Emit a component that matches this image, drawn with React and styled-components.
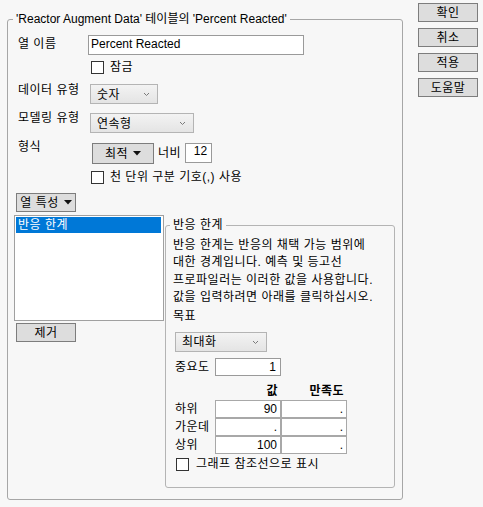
import styled, { createGlobalStyle } from "styled-components";

const GlobalStyle = createGlobalStyle`
  body {
    margin: 0;
    background: #f7f7f7;
  }
  #root {
    font-family: "Liberation Sans", "Noto Sans CJK KR", sans-serif;
    font-size: 12px;
    letter-spacing: 0.5px;
    color: #000;
  }
`;

function Chevron() {
  return (
    <svg width="7" height="5" viewBox="0 0 7 5">
      <path d="M1 1 L3.5 3.5 L6 1" fill="none" stroke="#7a7a7a" strokeWidth="1" />
    </svg>
  );
}

function Caret() {
  return (
    <svg width="8" height="5" viewBox="0 0 8 5">
      <polygon points="0,0 8,0 4,4.5" fill="#111" />
    </svg>
  );
}

function Select({ width, children }) {
  return (
    <SelectBox $w={width}>
      <span>{children}</span>
      <Chevron />
    </SelectBox>
  );
}

function Check({ children, gap = 6 }) {
  return (
    <CheckRow $gap={gap}>
      <Box />
      <span>{children}</span>
    </CheckRow>
  );
}

export default function App() {
  return (
    <>
      <GlobalStyle />
      <Page>
        <Group>
          <Legend>'Reactor Augment Data' 테이블의 'Percent Reacted'</Legend>

          <Row>
            <Label $dy={1}>열 이름</Label>
            <Field $w={216} $h={20} $latin>
              Percent Reacted
            </Field>
          </Row>
          <Row $top={6} $indent={73}>
            <Check>잠금</Check>
          </Row>
          <Row $top={10}>
            <Label $dy={-2}>데이터 유형</Label>
            <Indent $x={2}>
              <Select width={68}>숫자</Select>
            </Indent>
          </Row>
          <Row $top={9}>
            <Label $dy={-3}>모델링 유형</Label>
            <Indent $x={2}>
              <Select width={104}>연속형</Select>
            </Indent>
          </Row>
          <Row $top={10}>
            <Label $dy={-4}>형식</Label>
            <Indent $x={4}>
              <Button $w={62} $h={21}>
                최적 <Caret />
              </Button>
            </Indent>
            <Inline>너비</Inline>
            <Field $w={27} $h={20} $align="right" $lh={14} $latin>
              12
            </Field>
          </Row>
          <Row $top={7} $indent={73}>
            <Check>천 단위 구분 기호(,) 사용</Check>
          </Row>
          <Row $top={9} $indent={-2}>
            <Button $w={60} $h={19}>
              열 특성 <Caret />
            </Button>
          </Row>

          <Split>
            <LeftCol>
              <ListBox>
                <ListItem $selected>반응 한계</ListItem>
              </ListBox>
              <Button $w={60} $h={19} $ml={2}>
                제거
              </Button>
            </LeftCol>

            <Section>
              <SubLegend>반응 한계</SubLegend>
              <Description>
                {"반응 한계는 반응의 채택 가능 범위에\n대한 경계입니다. 예측 및 등고선\n프로파일러는 이러한 값을 사용합니다.\n값을 입력하려면 아래를 클릭하십시오."}
              </Description>
              <Caption>목표</Caption>
              <Indent $x={2} $top={8}>
                <Select width={92}>최대화</Select>
              </Indent>
              <SubRow $top={6}>
                <SubLabel>중요도</SubLabel>
                <Field $w={66} $h={18} $align="right" $lh={16} $latin>
                  1
                </Field>
              </SubRow>
              <LimitTable>
                <span />
                <HeadCell>값</HeadCell>
                <HeadCell>만족도</HeadCell>
                <SubLabel>하위</SubLabel>
                <Cell>90</Cell>
                <Cell>.</Cell>
                <SubLabel>가운데</SubLabel>
                <Cell>.</Cell>
                <Cell>.</Cell>
                <SubLabel>상위</SubLabel>
                <Cell>100</Cell>
                <Cell>.</Cell>
              </LimitTable>
              <Indent $x={3} $top={4}>
                <Check gap={7}>그래프 참조선으로 표시</Check>
              </Indent>
            </Section>
          </Split>
        </Group>

        <ButtonColumn>
          <Button $w={60} $h={19}>확인</Button>
          <Button $w={60} $h={19}>취소</Button>
          <Button $w={60} $h={19}>적용</Button>
          <Button $w={60} $h={19}>도움말</Button>
        </ButtonColumn>
      </Page>
    </>
  );
}

const Page = styled.div`
  display: flex;
  align-items: flex-start;
  gap: 15px;
  padding: 3px 0 0 7px;
`;

const Group = styled.fieldset`
  margin: 8px 0 0;
  width: 396px;
  height: 489px;
  box-sizing: border-box;
  min-width: 0;
  border: 1px solid #a6a6a6;
  border-radius: 3px;
  padding: 8px 0 0 10px;
`;

const Legend = styled.legend`
  font-size: 12px;
  line-height: 16px;
  letter-spacing: 0;
  padding: 0 3px;
  margin-left: -5px;
`;

const Row = styled.div`
  display: flex;
  align-items: flex-start;
  margin-top: ${({ $top }) => $top || 0}px;
  margin-left: ${({ $indent }) => $indent || 0}px;
`;

const Label = styled.div`
  width: 70px;
  flex-shrink: 0;
  line-height: 16px;
  margin-top: ${({ $dy }) => $dy || 0}px;
  white-space: nowrap;
`;

const Indent = styled.div`
  margin-left: ${({ $x }) => $x || 0}px;
  margin-top: ${({ $top }) => $top || 0}px;
`;

const Inline = styled.span`
  line-height: 16px;
  margin: 2px 4px 0 4px;
`;

const Field = styled.div`
  width: ${({ $w }) => $w}px;
  height: ${({ $h }) => $h}px;
  box-sizing: border-box;
  border: 1px solid #9a9a9a;
  background: #fff;
  padding: 0 4px 0 2px;
  line-height: ${({ $lh }) => $lh || 16}px;
  letter-spacing: ${({ $latin }) => ($latin ? "0" : "0.5px")};
  text-align: ${({ $align }) => $align || "left"};
  white-space: nowrap;
  overflow: hidden;
`;

const SelectBox = styled.div`
  width: ${({ $w }) => $w}px;
  height: 20px;
  box-sizing: border-box;
  border: 1px solid #b4b4b4;
  background: linear-gradient(#f3f3f3, #e4e4e4);
  display: flex;
  align-items: center;
  justify-content: space-between;
  padding: 1px 7px 0 6px;
  line-height: 16px;
`;

const Button = styled.div`
  width: ${({ $w }) => $w}px;
  height: ${({ $h }) => $h}px;
  box-sizing: border-box;
  border: 1px solid #7d7d7d;
  background: #dddddd;
  display: flex;
  align-items: center;
  justify-content: center;
  gap: 5px;
  line-height: 16px;
  margin-left: ${({ $ml }) => $ml || 0}px;
  margin-top: ${({ $ml }) => ($ml ? 2 : 0)}px;
`;

const CheckRow = styled.div`
  display: flex;
  align-items: center;
  height: 13px;
  gap: ${({ $gap }) => $gap}px;
  line-height: 13px;
`;

const Box = styled.div`
  width: 13px;
  height: 13px;
  box-sizing: border-box;
  border: 1px solid #333;
  background: #fff;
  flex-shrink: 0;
`;

const Split = styled.div`
  display: flex;
  align-items: flex-start;
  margin: 3px 0 0 -4px;
`;

const LeftCol = styled.div`
  display: flex;
  flex-direction: column;
`;

const ListBox = styled.div`
  width: 150px;
  height: 106px;
  box-sizing: border-box;
  border: 1px solid #a0a0a0;
  background: #fff;
  padding: 1px;
`;

const ListItem = styled.div`
  height: 16px;
  line-height: 16px;
  padding-left: 2px;
  margin-right: 1px;
  background: ${({ $selected }) => ($selected ? "#0078d7" : "transparent")};
  color: ${({ $selected }) => ($selected ? "#fff" : "#000")};
`;

const Section = styled.fieldset`
  margin: 2px 0 0 1px;
  width: 230px;
  height: 271px;
  box-sizing: border-box;
  min-width: 0;
  border: 1px solid #b4b4b4;
  border-radius: 3px;
  padding: 4px 0 0 7px;
`;

const SubLegend = styled.legend`
  font-size: 12px;
  line-height: 16px;
  padding: 0 3px;
  margin-left: -3px;
`;

const Description = styled.div`
  white-space: pre-line;
  line-height: 17.4px;
`;

const Caption = styled.div`
  line-height: 16px;
  margin-top: 1px;
`;

const SubRow = styled.div`
  display: flex;
  align-items: center;
  margin-top: ${({ $top }) => $top || 0}px;
  margin-left: 2px;
`;

const SubLabel = styled.div`
  width: 40px;
  line-height: 16px;
  white-space: nowrap;
`;

const LimitTable = styled.div`
  display: grid;
  grid-template-columns: 40px 66px 66px;
  grid-auto-rows: 18px;
  align-items: center;
  margin: 6px 0 0 2px;
`;

const HeadCell = styled.div`
  text-align: right;
  padding-right: 3px;
  font-weight: bold;
  line-height: 16px;
`;

const Cell = styled.div`
  height: 18px;
  box-sizing: border-box;
  border: 1px solid #a8a8a8;
  background: #fff;
  text-align: right;
  padding-right: 3px;
  letter-spacing: 0;
  line-height: 16px;
`;

const ButtonColumn = styled.div`
  display: flex;
  flex-direction: column;
  gap: 6px;
`;
